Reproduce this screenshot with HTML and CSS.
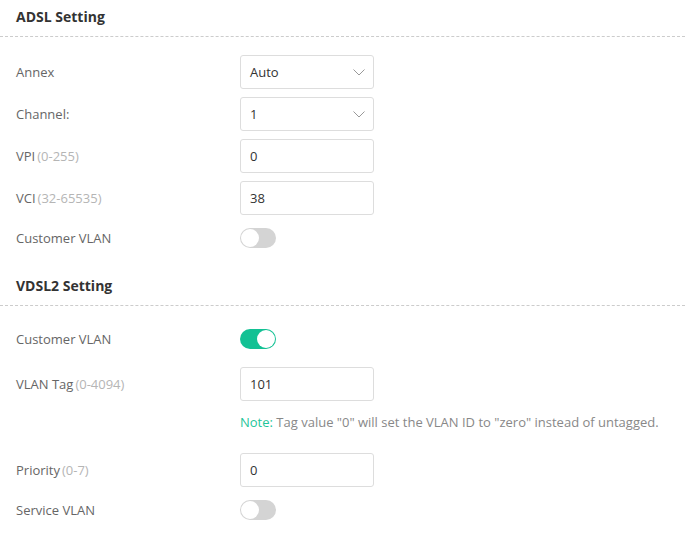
FILE: index.html
```html
<!DOCTYPE html>
<html lang="en">
<head>
    <meta charset="UTF-8">
    <meta name="viewport" content="width=device-width, initial-scale=1.0">
    <title>DSL Setting</title>
    <link rel="stylesheet" href="styles.css">
</head>
<body>
    <section class="setting">
        <h2 class="setting-title">ADSL Setting</h2>
        <div class="setting-body">
            <div class="row">
                <label>Annex</label>
                <div class="select">
                    <span>Auto</span>
                    <svg width="12" height="7" viewBox="0 0 12 7"><path d="M0.5 0.5 L6 6 L11.5 0.5" fill="none" stroke="#999" stroke-width="1"/></svg>
                </div>
            </div>
            <div class="row">
                <label>Channel:</label>
                <div class="select">
                    <span>1</span>
                    <svg width="12" height="7" viewBox="0 0 12 7"><path d="M0.5 0.5 L6 6 L11.5 0.5" fill="none" stroke="#999" stroke-width="1"/></svg>
                </div>
            </div>
            <div class="row">
                <label>VPI<span class="hint">(0-255)</span></label>
                <input type="text" class="text-input" value="0">
            </div>
            <div class="row">
                <label>VCI<span class="hint">(32-65535)</span></label>
                <input type="text" class="text-input" value="38">
            </div>
            <div class="row row-switch">
                <label>Customer VLAN</label>
                <span class="switch"></span>
            </div>
        </div>
    </section>

    <section class="setting">
        <h2 class="setting-title">VDSL2 Setting</h2>
        <div class="setting-body">
            <div class="row row-switch">
                <label>Customer VLAN</label>
                <span class="switch on"></span>
            </div>
            <div class="row">
                <label>VLAN Tag<span class="hint">(0-4094)</span></label>
                <input type="text" class="text-input" value="101">
            </div>
            <p class="note"><span>Note:</span> Tag value "0" will set the VLAN ID to "zero" instead of untagged.</p>
            <div class="row">
                <label>Priority<span class="hint">(0-7)</span></label>
                <input type="text" class="text-input" value="0">
            </div>
            <div class="row row-switch">
                <label>Service VLAN</label>
                <span class="switch"></span>
            </div>
        </div>
    </section>
</body>
</html>
```

FILE: styles.css
```css
body {
    margin: 0;
    font-family: 'Open Sans', sans-serif;
    font-size: 13px;
    color: #666;
    background-color: #fff;
}

.setting-title {
    margin: 0;
    padding: 6px 16px 8px;
    font-size: 14px;
    line-height: 22px;
    font-weight: 700;
    color: #333;
    border-bottom: 1px dashed #ccc;
}

.setting + .setting {
    margin-top: 16px;
}

.setting-body {
    padding: 18px 16px 0;
}

.row {
    display: flex;
    align-items: center;
    height: 34px;
    margin-bottom: 8px;
}

.row-switch {
    height: 30px;
    margin-bottom: 13px;
}

.row label {
    width: 224px;
    flex-shrink: 0;
}

.hint {
    color: #b5b5b5;
    margin-left: 2px;
}

.select,
.text-input {
    box-sizing: border-box;
    width: 134px;
    height: 34px;
    border: 1px solid #ddd;
    border-radius: 3px;
    background: #fff;
    font-family: inherit;
    font-size: 13px;
    color: #333;
}

.select {
    display: flex;
    align-items: center;
    justify-content: space-between;
    padding: 0 8px 0 9px;
}

.text-input {
    padding: 0 9px;
    outline: none;
}

.switch {
    position: relative;
    display: inline-block;
    width: 36px;
    height: 20px;
    border-radius: 10px;
    background-color: #d4d4d4;
}

.switch::after {
    content: "";
    position: absolute;
    top: 1px;
    left: 1px;
    width: 18px;
    height: 18px;
    border-radius: 50%;
    background-color: #fff;
}

.switch.on {
    background-color: #13c194;
}

.switch.on::after {
    left: auto;
    right: 1px;
}

.note {
    margin: 11px 0 21px 224px;
    line-height: 20px;
    color: #888;
}

.note span {
    color: #1fc59a;
}
```
